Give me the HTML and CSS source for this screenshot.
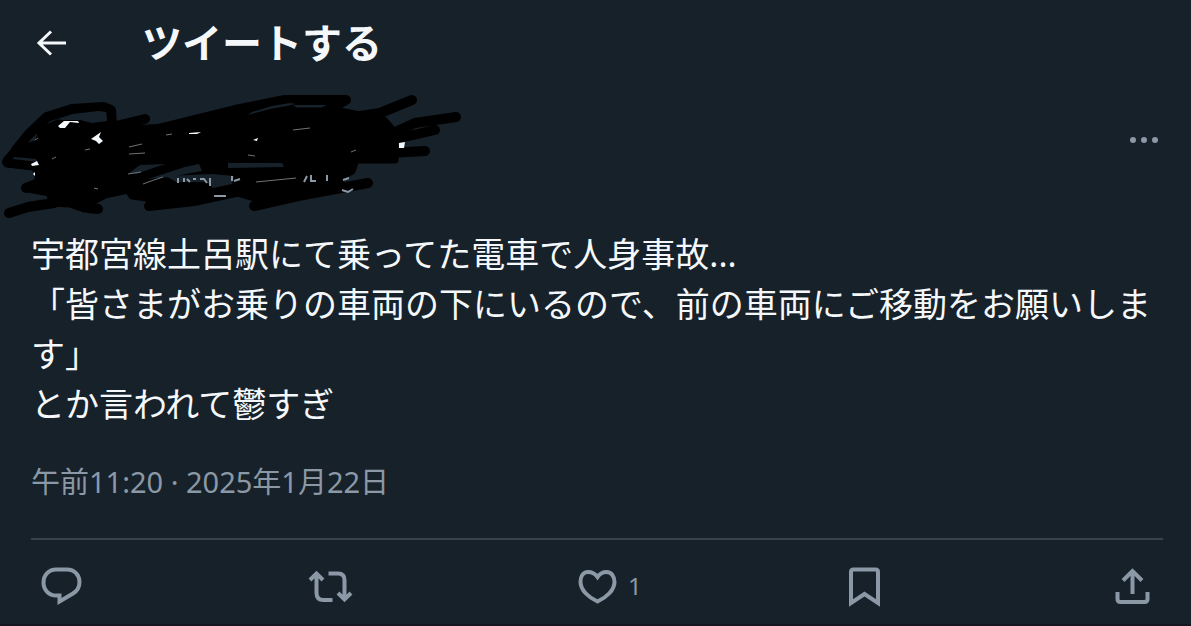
FILE: index.html
```html
<!DOCTYPE html>
<html lang="ja">
<head>
<meta charset="utf-8">
<meta name="viewport" content="width=device-width, initial-scale=1">
<title>ツイートする</title>
<link rel="stylesheet" href="styles.css">
</head>
<body>
<main class="page">
  <header class="topbar">
    <button class="icon-button back" type="button" aria-label="戻る">
      <svg width="32" height="28" viewBox="36 29 32 28"><path d="M66 43H39M51 31.5L39 43L51 54.5" stroke-width="3"/></svg>
    </button>
    <h1 class="title">ツイートする</h1>
  </header>
  <article class="tweet">
    <div class="author">
      <svg class="scribble" width="470" height="140" viewBox="0 85 470 140" role="img" aria-label="塗りつぶされたユーザー名">
        <g class="ink">
          <path class="mass" d="M14 150L38 142L42 129L58 122L80 121L112 124L132 128L165 126L215 116L260 110L340 110L384 119L392 128L395 136L395 159L356 159L352 170L344 174L338 186L300 193L262 199L230 190L200 196L152 202L147 197L132 195L128 189L105 194L94 200L84 208L70 203L51 202L50 192L28 188L38 180L38 172L34 166L7 163L7 158Z"/>
          <path d="M16 149L28 134L47 116L72 108L104 106L111 109L112 124M112 126L145 118M7 161L38 165M26 187L44 180M9 212L28 206L54 202M88 207L98 208M98 126L150 130L235 109L285 99L346 99L330 108L322 112M236 119L292 109M246 123L330 112M320 121L380 112L412 99M380 138L415 122L456 116M400 137L435 129M390 152L425 150M254 205L298 195L368 182M149 205L194 200L240 190"/>
        </g>
        <path class="gap" d="M14 156L36 158L38 161L13 158ZM59 119L74 113L98 110L106 111L107 120L92 122L80 119L66 119ZM129 172L140 164L166 163L156 166L136 173ZM185 166L199 163L202 170L169 176L148 178ZM228 162L282 162L284 166L228 167ZM166 175L212 173L234 175L232 183L213 187L207 181L176 181ZM252 111L272 105L290 102L296 103L270 108L248 114Z"/>
        <path class="white" d="M58 125L64 120L78 120L79 122L70 121L65 127L60 127ZM91 138L101 131L99 136L103 140L99 143L96 140ZM31 163L37 160L39 164L32 165ZM33 173L35 171L35 175ZM399 142L405 141L404 147L399 147ZM253 139L258 137L257 140ZM189 132L201 131L197 133L189 133Z"/>
        <path class="glint" d="M129 146L142 143M129 153L145 152M166 134L172 133M293 129L310 127M248 154L255 155M351 151L356 149M35 139L38 137M85 149L90 148M52 158L56 156M94 187L98 188M256 181L296 177M143 183L154 179L163 176M128 173L141 171"/>
        <path class="remnant" d="M178 177V182M184 177V181M187 178L190 181M193 178H196M200 178L204 178L207 182M210 177V185M214 195H226M232 175V180M234 180L240 178M304 181L307 175M311 174V180H316M327 174V180M343 179L349 177M342 189L348 191L353 188"/>
      </svg>
      <button class="icon-button more" type="button" aria-label="もっと見る">
        <svg width="30" height="8" viewBox="0 0 30 8"><g fill="currentColor" stroke="none"><circle cx="4" cy="4" r="3"/><circle cx="15" cy="4" r="3"/><circle cx="26" cy="4" r="3"/></g></svg>
      </button>
    </div>
    <p class="body">宇都宮線土呂駅にて乗ってた電車で人身事故...<br>「皆さまがお乗りの車両の下にいるので、前の車両にご移動をお願いします」<br>とか言われて鬱すぎ</p>
    <a class="date" href="#"><time datetime="2025-01-22T11:20">午前11:20 · 2025年1月22日</time></a>
    <div class="actions">
      <button class="icon-button" type="button" aria-label="返信">
        <svg width="40" height="40" viewBox="41 566 40 40"><path d="M56 569.500H67C74.500 569.500 79.500 575 79.500 582C79.500 587 77 591 73 593.500L59.500 601.500V595.500H56C49 595.500 43.500 590 43.500 582.500C43.500 575 49 569.500 56 569.500Z"/></svg>
      </button>
      <button class="icon-button" type="button" aria-label="リツイート">
        <svg width="46" height="40" viewBox="309 566 46 40"><path d="M309 580L315.500 573.500L322 580M315.500 574V593Q315.500 600 322.500 600H331.500M327.500 573.500H337Q343.500 573.500 343.500 580V599M337 593L343.500 599.500L350 593"/></svg>
      </button>
      <button class="icon-button like" type="button" aria-label="いいね 1">
        <svg width="40" height="40" viewBox="578 566 40 40"><path d="M597.500 577C594.500 573 591 572 588 572C583 572 580.500 576.500 580.500 582C580.500 590 588.500 597.500 597.500 601.500C606.500 597.500 614.500 590 614.500 582C614.500 576.500 611.500 572 606.500 572C603 572 600 573.500 597.500 577Z"/></svg>
        <span class="count">1</span>
      </button>
      <button class="icon-button" type="button" aria-label="ブックマーク">
        <svg width="34" height="40" viewBox="847 566 34 40"><path d="M851 603V572Q851 569.500 853.500 569.500H875.500Q878 569.500 878 572V603L864.500 594Z"/></svg>
      </button>
      <button class="icon-button" type="button" aria-label="共有">
        <svg width="36" height="40" viewBox="1115 566 36 40"><path d="M1132.500 594V571M1123 580.500L1132.500 571L1142 580.500M1117.500 592V599Q1117.500 602 1120.500 602H1144.500Q1147.500 602 1147.500 599V592"/></svg>
      </button>
    </div>
  </article>
</main>
</body>
</html>
```
FILE: styles.css
```css
* {
  box-sizing: border-box;
}

body {
  margin: 0;
  background: #17212a;
  color: #f5f8fa;
  font-family: "Noto Sans", "Noto Sans CJK JP", sans-serif;
}

.page {
  border-bottom: 2px solid #141722;
}

.topbar {
  display: flex;
  align-items: center;
  gap: 74px;
  height: 86px;
  padding: 0 36px;
}

.title {
  margin: 0;
  font-size: 40px;
  font-weight: 700;
  line-height: 62px;
}

.icon-button {
  display: flex;
  align-items: center;
  padding: 0;
  border: 0;
  background: none;
  color: #8b98a5;
  font: inherit;
  cursor: pointer;
}

.icon-button svg {
  display: block;
  overflow: visible;
  fill: none;
  stroke: currentColor;
  stroke-width: 4;
}

.icon-button.back {
  color: #f5f8fa;
}

.author {
  display: flex;
  justify-content: space-between;
  align-items: flex-start;
  padding-right: 32px;
}

.more {
  padding: 50px 0;
}

.scribble {
  display: block;
  overflow: visible;
  fill: none;
}

.ink {
  stroke: #000;
  stroke-width: 10;
  stroke-linecap: round;
  stroke-linejoin: round;
}

.mass {
  fill: #000;
  stroke-width: 7;
}

.gap {
  fill: #17212a;
}

.white {
  fill: #f5f8fa;
}

.glint {
  stroke: #6f7376;
  stroke-width: 1;
}

.remnant {
  stroke: #8b98a5;
  stroke-width: 2;
}

.body {
  margin: 0;
  padding: 3px 28px 0 31px;
  font-size: 34px;
  line-height: 50px;
}

.date {
  display: block;
  padding: 31px 31px 34px;
  color: #8b98a5;
  font-size: 29px;
  line-height: 44px;
  text-decoration: none;
}

.actions {
  display: grid;
  grid-template-columns: repeat(4, 1fr) auto;
  align-items: center;
  margin: 0 28px 0 31px;
  padding: 26px 12px 18px 10px;
  border-top: 2px solid #38444d;
}

.like {
  gap: 10px;
}

.count {
  font-size: 24px;
  line-height: 40px;
}
```
